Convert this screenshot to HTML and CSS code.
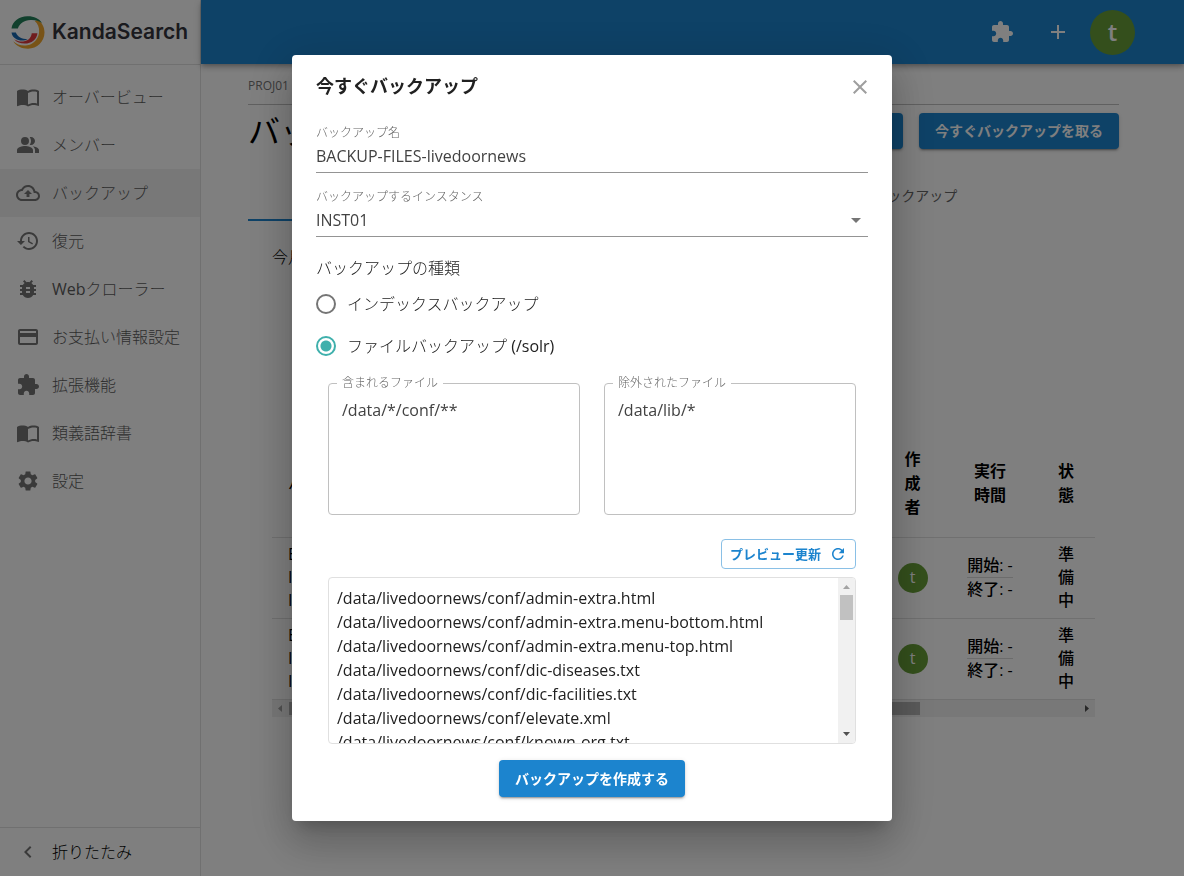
FILE: index.html
```html
<!DOCTYPE html>
<html lang="ja">
<head>
<meta charset="utf-8">
<title>KandaSearch</title>
<link rel="stylesheet" href="styles.css">
</head>
<body>
<svg class="sprite" aria-hidden="true">
  <symbol id="i-book" viewBox="0 0 24 24"><path d="M17.5 4.5c-1.95 0-4.05.4-5.5 1.5-1.45-1.1-3.55-1.5-5.5-1.5S2.45 4.9 1 6v14.65c0 .65.73.45.75.45C3.1 20.45 5.05 20 6.5 20c1.95 0 4.05.4 5.5 1.5 1.35-.85 3.8-1.5 5.5-1.5 1.65 0 3.35.3 4.75 1.05.41.21.75-.19.75-.45V6c-1.49-1.12-3.63-1.5-5.5-1.5zm3.5 14c-1.1-.35-2.3-.5-3.5-.5-1.7 0-4.15.65-5.5 1.5V8c1.35-.85 3.8-1.5 5.5-1.5 1.2 0 2.4.15 3.5.5v11.5z"/></symbol>
  <symbol id="i-people" viewBox="0 0 24 24"><path d="M16.67 13.13C18.04 14.06 19 15.32 19 17v3h4v-3c0-2.18-3.57-3.47-6.33-3.87zM15 12c2.21 0 4-1.79 4-4s-1.79-4-4-4c-.47 0-.91.1-1.33.24C14.5 5.27 15 6.58 15 8s-.5 2.73-1.33 3.76c.42.14.86.24 1.33.24zM9 4a4 4 0 1 0 0 8 4 4 0 0 0 0-8zM9 13c-2.67 0-8 1.34-8 4v3h16v-3c0-2.66-5.33-4-8-4z"/></symbol>
  <symbol id="i-cloud" viewBox="0 0 24 24"><path d="M19.35 10.04C18.67 6.59 15.64 4 12 4 9.11 4 6.6 5.64 5.35 8.04 2.34 8.36 0 10.91 0 14c0 3.31 2.69 6 6 6h13c2.76 0 5-2.24 5-5 0-2.64-2.05-4.78-4.65-4.96zM19 18H6c-2.21 0-4-1.79-4-4 0-2.05 1.53-3.76 3.56-3.97l1.07-.11.5-.95C8.08 7.14 9.94 6 12 6c2.62 0 4.88 1.86 5.39 4.43l.3 1.5 1.53.11c1.56.1 2.78 1.41 2.78 2.96 0 1.65-1.35 3-3 3zM8 13h2.55v3h2.9v-3H16l-4-4z"/></symbol>
  <symbol id="i-history" viewBox="0 0 24 24"><path d="M13 3c-4.97 0-9 4.03-9 9H1l3.89 3.89.07.14L9 12H6c0-3.87 3.13-7 7-7s7 3.13 7 7-3.13 7-7 7c-1.93 0-3.68-.79-4.94-2.06l-1.42 1.42C8.27 19.99 10.51 21 13 21c4.97 0 9-4.03 9-9s-4.03-9-9-9zm-1 5v5l4.28 2.54.72-1.21-3.5-2.08V8H12z"/></symbol>
  <symbol id="i-bug" viewBox="0 0 24 24"><path d="M20 8h-2.81c-.45-.78-1.07-1.45-1.82-1.96L17 4.41 15.59 3l-2.17 2.17C12.96 5.06 12.49 5 12 5c-.49 0-.96.06-1.41.17L8.41 3 7 4.41l1.62 1.63C7.88 6.55 7.26 7.22 6.81 8H4v2h2.09c-.05.33-.09.66-.09 1v1H4v2h2v1c0 .34.04.67.09 1H4v2h2.81c1.04 1.79 2.97 3 5.19 3s4.15-1.21 5.19-3H20v-2h-2.09c.05-.33.09-.66.09-1v-1h2v-2h-2v-1c0-.34-.04-.67-.09-1H20V8zm-6 8h-4v-2h4v2zm0-4h-4v-2h4v2z"/></symbol>
  <symbol id="i-card" viewBox="0 0 24 24"><path d="M20 4H4c-1.11 0-1.99.89-1.99 2L2 18c0 1.11.89 2 2 2h16c1.11 0 2-.89 2-2V6c0-1.11-.89-2-2-2zm0 14H4v-6h16v6zm0-10H4V6h16v2z"/></symbol>
  <symbol id="i-ext" viewBox="0 0 24 24"><path d="M20.5 11H19V7c0-1.1-.9-2-2-2h-4V3.5C13 2.12 11.88 1 10.5 1S8 2.12 8 3.5V5H4c-1.1 0-1.99.9-1.99 2v3.8H3.5c1.49 0 2.7 1.21 2.7 2.7s-1.21 2.7-2.7 2.7H2V20c0 1.1.9 2 2 2h3.8v-1.5c0-1.49 1.21-2.7 2.7-2.7 1.49 0 2.7 1.21 2.7 2.7V22H17c1.1 0 2-.9 2-2v-4h1.5c1.38 0 2.5-1.12 2.5-2.5S21.88 11 20.5 11z"/></symbol>
  <symbol id="i-gear" viewBox="0 0 24 24"><path d="M19.14 12.94c.04-.3.06-.61.06-.94 0-.32-.02-.64-.07-.94l2.03-1.58c.18-.14.23-.41.12-.61l-1.92-3.32c-.12-.22-.37-.29-.59-.22l-2.39.96c-.5-.38-1.03-.7-1.62-.94l-.36-2.54c-.04-.24-.24-.41-.48-.41h-3.84c-.24 0-.43.17-.47.41l-.36 2.54c-.59.24-1.13.57-1.62.94l-2.39-.96c-.22-.08-.47 0-.59.22L2.74 8.87c-.12.21-.08.47.12.61l2.03 1.58c-.05.3-.09.63-.09.94s.02.64.07.94l-2.03 1.58c-.18.14-.23.41-.12.61l1.92 3.32c.12.22.37.29.59.22l2.39-.96c.5.38 1.03.7 1.62.94l.36 2.54c.05.24.24.41.48.41h3.84c.24 0 .44-.17.47-.41l.36-2.54c.59-.24 1.13-.56 1.62-.94l2.39.96c.22.08.47 0 .59-.22l1.92-3.32c.12-.22.07-.47-.12-.61l-2.01-1.58zM12 15.6c-1.98 0-3.6-1.62-3.6-3.6s1.62-3.6 3.6-3.6 3.6 1.62 3.6 3.6-1.62 3.6-3.6 3.6z"/></symbol>
  <symbol id="i-left" viewBox="0 0 24 24"><path d="M15.41 7.41 14 6l-6 6 6 6 1.41-1.41L10.83 12z"/></symbol>
  <symbol id="i-plus" viewBox="0 0 24 24"><path d="M19 13h-6v6h-2v-6H5v-2h6V5h2v6h6v2z"/></symbol>
  <symbol id="i-close" viewBox="0 0 24 24"><path d="M19 6.41 17.59 5 12 10.59 6.41 5 5 6.41 10.59 12 5 17.59 6.41 19 12 13.41 17.59 19 19 17.59 13.41 12z"/></symbol>
  <symbol id="i-refresh" viewBox="0 0 24 24"><path d="M17.65 6.35C16.2 4.9 14.21 4 12 4c-4.42 0-7.99 3.58-7.99 8s3.57 8 7.99 8c3.73 0 6.84-2.55 7.73-6h-2.08c-.82 2.33-3.04 4-5.65 4-3.31 0-6-2.69-6-6s2.69-6 6-6c1.66 0 3.14.69 4.22 1.78L13 11h7V4l-2.35 2.35z"/></symbol>
</svg>

<div class="app">
  <aside class="sidebar">
    <a class="brand" href="#">
      <svg class="brand-mark" viewBox="34 47 100 98" aria-hidden="true">
        <path fill="#f0a62c" d="M114 58C126 67 133 81 133 96C133 123 111 144 84 144C66 144 49 137 40 122C51 132 66 137 82 134C103 130 117 112 117 92C117 80 114 71 104 62Z"/>
        <path fill="#22805a" d="M35 84C38 62 59 47 84 48C102 48 117 55 126 68C116 61 104 58 91 59C73 60 58 70 54 84Z"/>
        <path fill="#1766b0" d="M35 96H48C52 108 66 116 83 116C68 124 39 120 35 96Z"/>
        <path fill="#e0383c" d="M95 98H112C110 117 95 128 74 129C61 129 50 125 43 116C53 122 63 124 73 122C86 119 94 110 95 98Z"/>
      </svg>
      <span class="brand-name">KandaSearch</span>
    </a>
    <nav class="nav">
      <a class="nav-item" href="#"><svg class="icon"><use href="#i-book"/></svg>オーバービュー</a>
      <a class="nav-item" href="#"><svg class="icon"><use href="#i-people"/></svg>メンバー</a>
      <a class="nav-item nav-item-active" href="#"><svg class="icon"><use href="#i-cloud"/></svg>バックアップ</a>
      <a class="nav-item" href="#"><svg class="icon"><use href="#i-history"/></svg>復元</a>
      <a class="nav-item" href="#"><svg class="icon"><use href="#i-bug"/></svg><span><span class="latin">Web</span>クローラー</span></a>
      <a class="nav-item" href="#"><svg class="icon"><use href="#i-card"/></svg>お支払い情報設定</a>
      <a class="nav-item" href="#"><svg class="icon"><use href="#i-ext"/></svg>拡張機能</a>
      <a class="nav-item" href="#"><svg class="icon"><use href="#i-book"/></svg>類義語辞書</a>
      <a class="nav-item" href="#"><svg class="icon"><use href="#i-gear"/></svg>設定</a>
    </nav>
    <button class="collapse" type="button"><svg class="icon"><use href="#i-left"/></svg>折りたたみ</button>
  </aside>

  <div class="page">
    <header class="topbar">
      <button class="top-btn" type="button" aria-label="拡張機能"><svg class="icon"><use href="#i-ext"/></svg></button>
      <button class="top-btn" type="button" aria-label="追加"><svg class="icon"><use href="#i-plus"/></svg></button>
      <button class="avatar avatar-large" type="button">t</button>
    </header>
    <main class="main">
      <div class="crumbs">PROJ01</div>
      <div class="heading">
        <h1 class="page-title">バックアップ</h1>
        <div class="heading-actions">
          <button class="btn" type="button">設定</button>
          <button class="btn" type="button">今すぐバックアップを取る</button>
        </div>
      </div>
      <div class="tabs">
        <button class="tab tab-active" type="button">バックアップ</button>
        <button class="tab" type="button">自動バックアップ</button>
      </div>
      <section class="panel">
        <p class="note">今月</p>
        <table class="table">
          <thead>
            <tr><th class="col-name">バックアップ名</th><th class="col-user">作成者</th><th class="col-time">実行時間</th><th class="col-state">状態</th></tr>
          </thead>
          <tbody>
            <tr>
              <td class="col-name">B<br>I<br>I</td>
              <td class="col-user"><span class="avatar">t</span></td>
              <td class="col-time"><div class="times"><span class="time">開始: -</span><span class="time">終了: -</span></div></td>
              <td class="col-state">準備中</td>
            </tr>
            <tr>
              <td class="col-name">B<br>I<br>I</td>
              <td class="col-user"><span class="avatar">t</span></td>
              <td class="col-time"><div class="times"><span class="time">開始: -</span><span class="time">終了: -</span></div></td>
              <td class="col-state">準備中</td>
            </tr>
          </tbody>
        </table>
        <div class="hscroll" aria-hidden="true">
          <svg class="arrow" viewBox="0 0 17 17"><path fill="#a3a3a3" d="M10 5v7L6 8.500z"/></svg>
          <div class="hscroll-track"><div class="hscroll-thumb"></div></div>
          <svg class="arrow" viewBox="0 0 17 17"><path fill="#505050" d="M7 5v7l4-3.500z"/></svg>
        </div>
      </section>
    </main>
  </div>
</div>

<div class="overlay">
  <form class="dialog" role="dialog" aria-labelledby="dialog-title">
    <div class="dialog-head">
      <h2 class="dialog-title" id="dialog-title">今すぐバックアップ</h2>
      <button class="close" type="button" aria-label="閉じる"><svg class="icon"><use href="#i-close"/></svg></button>
    </div>
    <div class="field">
      <label class="field-label" for="name">バックアップ名</label>
      <input class="field-input" id="name" type="text" value="BACKUP-FILES-livedoornews">
    </div>
    <div class="field">
      <label class="field-label" for="inst">バックアップするインスタンス</label>
      <div class="select-wrap">
        <select class="field-input" id="inst"><option>INST01</option></select>
        <svg class="caret" viewBox="0 0 10 5" aria-hidden="true"><path d="M0 0h10L5 5z"/></svg>
      </div>
    </div>
    <div class="kinds" role="radiogroup" aria-labelledby="kind">
      <div class="kind-title" id="kind">バックアップの種類</div>
      <label class="kind"><input class="radio" type="radio" name="kind">インデックスバックアップ</label>
      <label class="kind"><input class="radio" type="radio" name="kind" checked><span>ファイルバックアップ <span class="latin">(/solr)</span></span></label>
    </div>
    <div class="files">
      <div class="patterns">
        <fieldset class="outlined">
          <legend class="outlined-label"><label for="inc">含まれるファイル</label></legend>
          <textarea class="outlined-input" id="inc" rows="5">/data/*/conf/**</textarea>
        </fieldset>
        <fieldset class="outlined">
          <legend class="outlined-label"><label for="exc">除外されたファイル</label></legend>
          <textarea class="outlined-input" id="exc" rows="5">/data/lib/*</textarea>
        </fieldset>
      </div>
      <button class="btn-outline" type="button">プレビュー更新<svg class="icon-small"><use href="#i-refresh"/></svg></button>
      <div class="preview">
        <ul class="preview-list">
          <li>/data/livedoornews/conf/admin-extra.html</li>
          <li>/data/livedoornews/conf/admin-extra.menu-bottom.html</li>
          <li>/data/livedoornews/conf/admin-extra.menu-top.html</li>
          <li>/data/livedoornews/conf/dic-diseases.txt</li>
          <li>/data/livedoornews/conf/dic-facilities.txt</li>
          <li>/data/livedoornews/conf/elevate.xml</li>
          <li>/data/livedoornews/conf/known-org.txt</li>
        </ul>
        <div class="vscroll" aria-hidden="true">
          <svg class="arrow" viewBox="0 0 17 17"><path fill="#a3a3a3" d="M5 11h7L8.500 7z"/></svg>
          <div class="vscroll-thumb"></div>
          <svg class="arrow" viewBox="0 0 17 17"><path fill="#505050" d="M5 6h7l-3.500 4z"/></svg>
        </div>
      </div>
    </div>
    <button class="btn btn-submit" type="submit">バックアップを作成する</button>
  </form>
</div>
</body>
</html>
```

FILE: styles.css
```css
* { box-sizing: border-box; }
body, button, input, select, textarea {
  font-family: "Open Sans", "Noto Sans CJK JP", sans-serif;
  font-size: 16px;
  font-weight: 300;
  line-height: 24px;
}
body { margin: 0; background: #fff; color: #000; overflow: hidden; }
button { border: 0; background: none; padding: 0; cursor: pointer; color: inherit; }
a { color: inherit; text-decoration: none; }
h1, h2, p, ul { margin: 0; padding: 0; }
.sprite { display: none; }
.latin { font-weight: 400; }
.icon { width: 24px; height: 24px; fill: currentColor; flex: none; display: block; }

.app { display: flex; height: 100vh; }
.sidebar { display: flex; flex-direction: column; width: 201px; flex: none; border-right: 1px solid #e0e0e0; }
.brand { display: flex; align-items: center; gap: 7px; height: 65px; padding-left: 11px; border-bottom: 1px solid #e0e0e0; }
.brand-mark { width: 34px; height: 33px; }
.brand-name { font-family: Inter, sans-serif; font-size: 21px; font-weight: 600; color: #35353d; }
.nav { flex: 1; padding-top: 8px; }
.nav-item { display: flex; align-items: center; gap: 12px; height: 48px; padding-left: 16px; color: #5c5c5c; white-space: nowrap; }
.nav-item .icon { color: #757575; }
.nav-item-active { background: #f0f0f0; }
.collapse { display: flex; align-items: center; gap: 12px; height: 49px; padding-left: 16px; border-top: 1px solid #e0e0e0; }
.collapse .icon { color: #757575; }

.page { flex: 1; min-width: 0; display: flex; flex-direction: column; }
.topbar {
  display: flex; justify-content: flex-end; align-items: center; gap: 20px;
  height: 64px; flex: none; padding-right: 49px; background: #1c84ce; color: #fff;
  box-shadow: 0 2px 4px -1px rgba(0,0,0,.2), 0 4px 5px rgba(0,0,0,.14), 0 1px 10px rgba(0,0,0,.12);
}
.top-btn { width: 36px; display: flex; justify-content: center; }
.avatar {
  display: inline-flex; align-items: center; justify-content: center; vertical-align: middle;
  width: 30px; height: 30px; border-radius: 50%; background: #689f38; color: #fff; font-weight: 400;
}
.avatar-large { width: 45px; height: 45px; font-size: 24px; font-weight: 600; margin-left: -6px; }

.main { padding: 10px 65px 0 47px; }
.crumbs { padding-bottom: 6px; border-bottom: 1px solid #c0c0c0; font-size: 12px; font-weight: 400; color: #757575; }
.heading { display: flex; justify-content: space-between; align-items: flex-start; padding-top: 8px; }
.page-title { font-size: 32px; font-weight: 400; line-height: 36px; }
.heading-actions { display: flex; gap: 16px; }
.btn {
  padding: 6px 16px; border-radius: 4px; background: #1c84ce; color: #fff;
  font-size: 14px; font-weight: 700;
  box-shadow: 0 3px 1px -2px rgba(0,0,0,.2), 0 2px 2px rgba(0,0,0,.14), 0 1px 5px rgba(0,0,0,.12);
}
.tabs { display: flex; margin-top: 24px; }
.tab { flex: 1; height: 48px; border-bottom: 2px solid transparent; font-size: 14px; font-weight: 400; color: #666; }
.tab-active { border-color: #1c84ce; color: #1c84ce; }
.panel { padding: 24px 24px 0; }
.table { width: 100%; margin-top: 160px; table-layout: fixed; border-collapse: collapse; font-weight: 500; }
.table th { height: 108px; padding: 0 14px; font-weight: 700; border-bottom: 1px solid #e0e0e0; }
.table td { height: 81px; padding: 5px 0; text-align: center; line-height: 23px; border-bottom: 1px solid #e0e0e0; }
.table .col-name { text-align: left; padding-left: 16px; font-weight: 400; }
.col-user { width: 61px; }
.col-time { width: 94px; }
.col-state { width: 58px; }
.table td.col-state { padding: 5px 20px; }
.table th.col-time { padding: 0 30px; }
.table th.col-user, .table th.col-state { padding: 0 20px; }
.times { display: inline-flex; flex-direction: column; line-height: 23px; }
.time + .time { border-top: 1px solid #d8d8d8; }
.arrow { width: 17px; height: 17px; flex: none; display: block; }
.hscroll { display: flex; align-items: center; background: #f1f1f1; }
.hscroll-track { flex: 1; }
.hscroll-thumb { width: 80%; height: 13px; background: #b4b4b4; }

.overlay { position: fixed; inset: 0; display: flex; align-items: center; justify-content: center; background: rgba(0,0,0,.5); }
.dialog {
  display: flex; flex-direction: column; width: 600px; max-width: 100%; padding: 18px 24px 24px;
  border-radius: 4px; background: #fff; color: #212121;
  box-shadow: 0 11px 15px -7px rgba(0,0,0,.2), 0 24px 38px 3px rgba(0,0,0,.14), 0 9px 46px 8px rgba(0,0,0,.12);
}
.dialog-head { display: flex; justify-content: space-between; align-items: flex-start; height: 28px; }
.dialog-title { font-size: 18px; font-weight: 700; line-height: 26px; }
.close { width: 24px; height: 28px; padding: 2px 0; margin-right: -4px; color: #9e9e9e; }
.field { display: flex; flex-direction: column; height: 48px; margin-top: 16px; border-bottom: 1px solid #949494; }
.dialog-head + .field { margin-top: 24px; }
.field-label { font-size: 12px; line-height: 16px; color: #666; }
.field-input {
  display: block; width: 100%; height: 28px; margin-top: 1px; padding: 0; border: 0; outline: 0;
  background: none; appearance: none; color: #424242; font-weight: 400;
}
.select-wrap { position: relative; }
.caret { position: absolute; right: 7px; top: 13px; width: 10px; height: 5px; fill: #757575; }
.kinds { display: flex; flex-direction: column; margin-top: 19px; }
.kind { display: flex; align-items: center; gap: 11px; height: 42px; }
.kind-title + .kind { margin-top: 3px; }
.radio { appearance: none; width: 20px; height: 20px; margin: 0; border: 2px solid #757575; border-radius: 50%; }
.radio:checked { border-color: #3fb0ac; background: radial-gradient(circle, #3fb0ac 0 5px, transparent 6px); }
.files { display: flex; flex-direction: column; padding: 0 12px; margin-top: 7px; }
.patterns { display: grid; grid-template-columns: 1fr 1fr; gap: 24px; }
.outlined { min-width: 0; margin: 0; padding: 0 13px 4px 8px; border: 1px solid #c0c0c0; border-radius: 4px; }
.outlined-label { padding: 0 5px; font-size: 12px; line-height: 18px; color: #666; }
.outlined-label label { display: block; }
.outlined-input { display: block; width: 100%; height: 118px; padding: 6px 0 0 5px; border: 0; outline: 0; resize: none; background: none; color: #424242; font-weight: 400; }
.btn-outline {
  display: flex; align-items: center; gap: 8px; align-self: flex-end; height: 30px; margin-top: 24px; padding: 0 8px;
  border: 1px solid #8ac0e6; border-radius: 4px; color: #1c84ce; font-size: 13px; font-weight: 700;
}
.icon-small { width: 18px; height: 18px; fill: currentColor; }
.preview { display: flex; height: 167px; margin-top: 8px; border: 1px solid #e0e0e0; border-radius: 4px; overflow: hidden; }
.preview-list { flex: 1; padding: 8px; list-style: none; font-weight: 400; }
.vscroll { display: flex; flex-direction: column; align-items: center; width: 17px; background: #f1f1f1; }
.vscroll-thumb { width: 13px; height: 25px; margin-bottom: auto; background: #c1c1c1; }
.btn-submit { align-self: center; margin-top: 16px; height: 37px; }
```
